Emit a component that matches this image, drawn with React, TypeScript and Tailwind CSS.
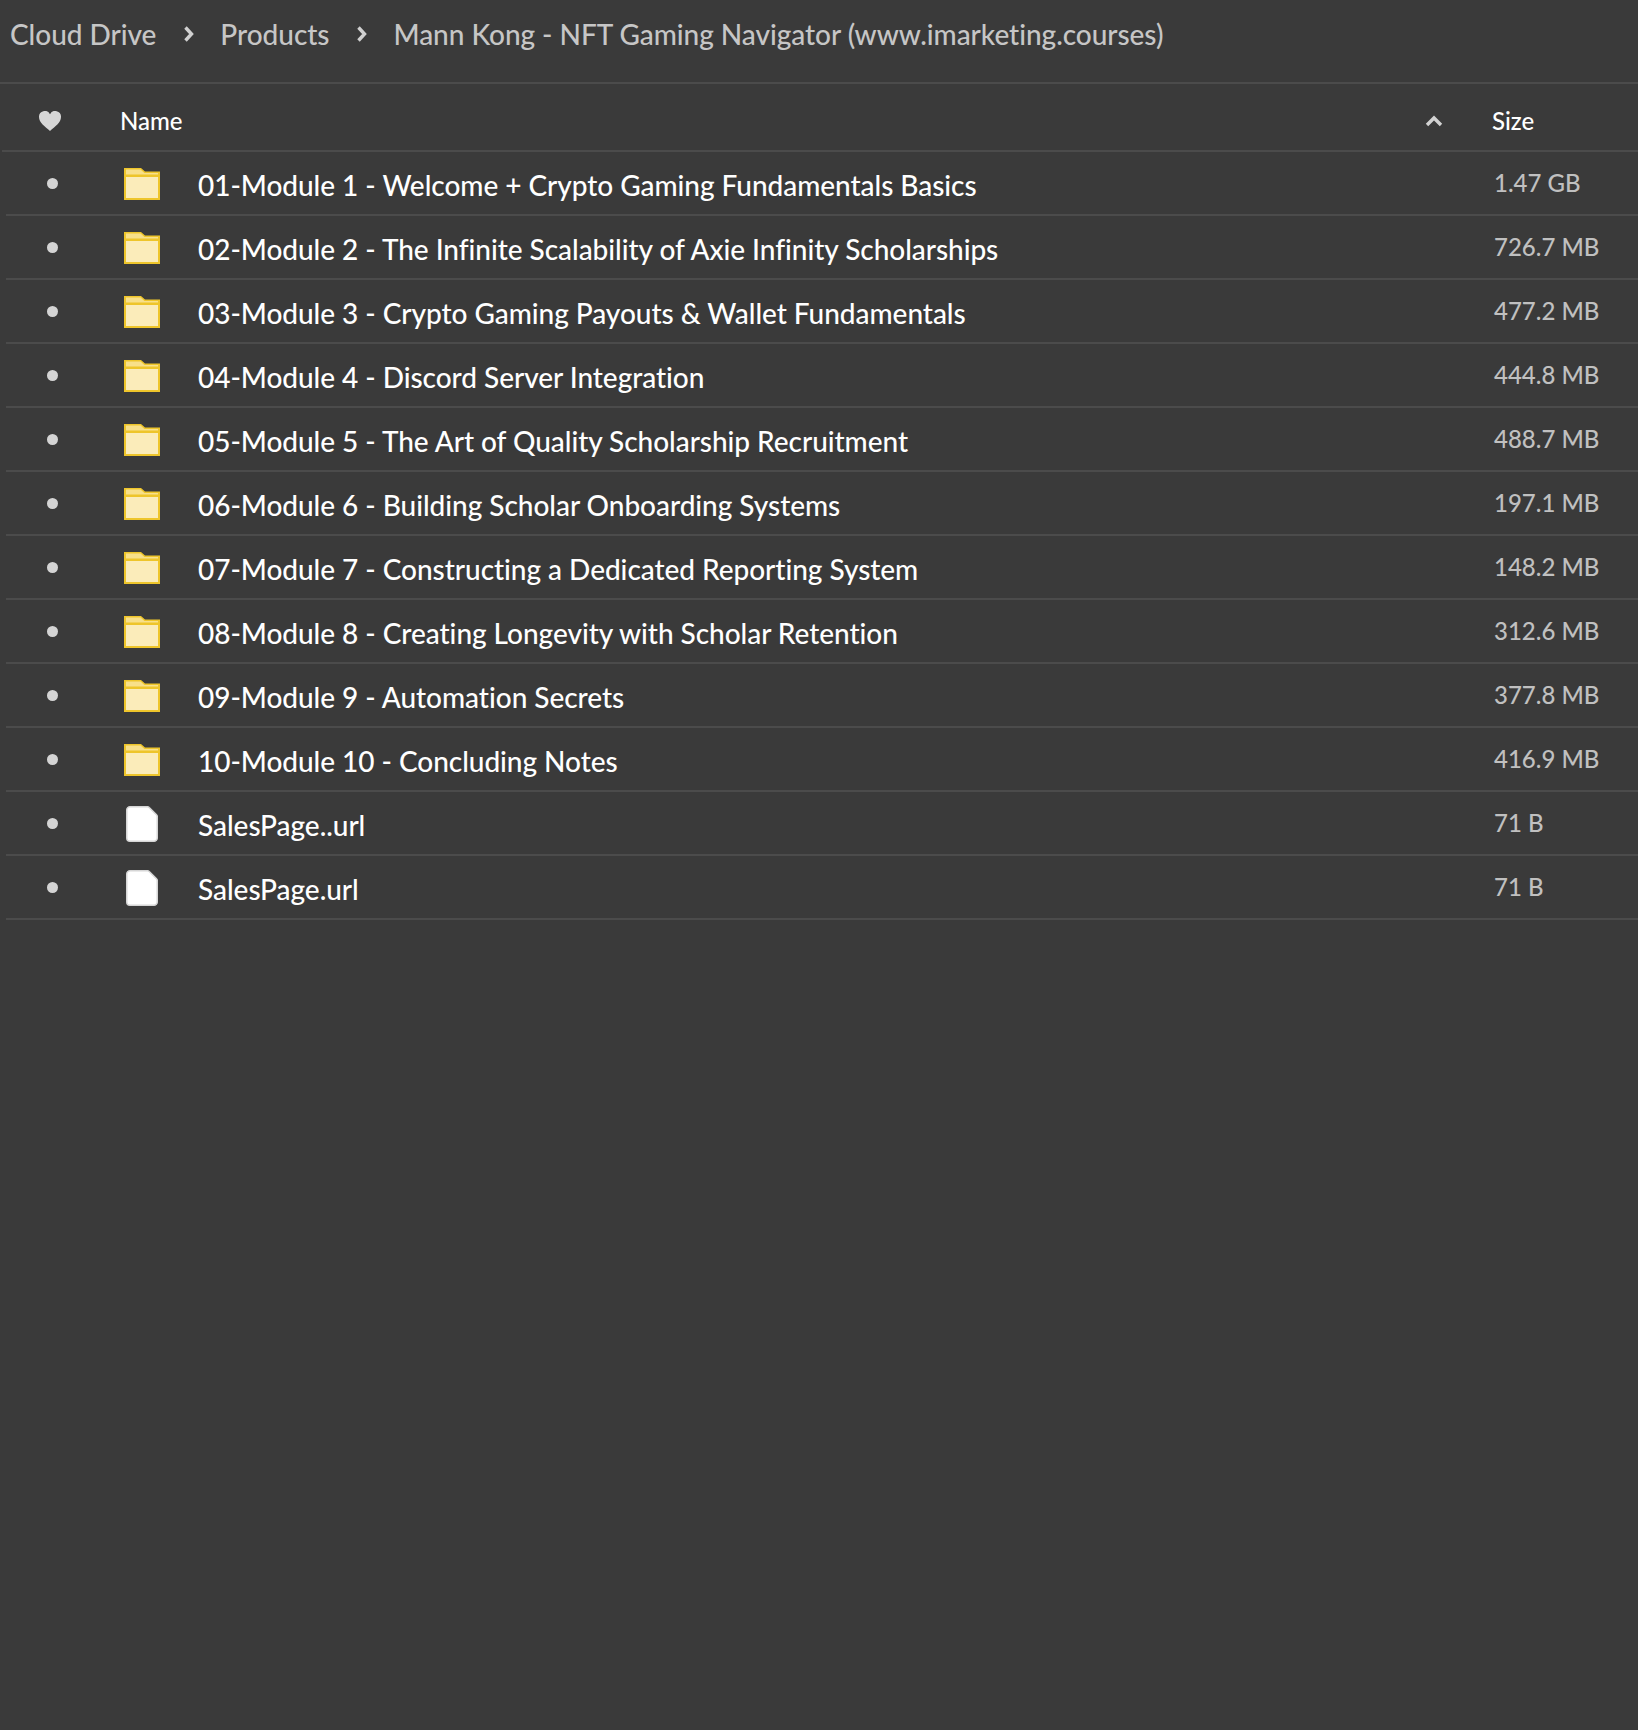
const rows: [string, string, boolean][] = [
  ["01-Module 1 - Welcome + Crypto Gaming Fundamentals Basics", "1.47 GB", true],
  ["02-Module 2 - The Infinite Scalability of Axie Infinity Scholarships", "726.7 MB", true],
  ["03-Module 3 - Crypto Gaming Payouts & Wallet Fundamentals", "477.2 MB", true],
  ["04-Module 4 - Discord Server Integration", "444.8 MB", true],
  ["05-Module 5 - The Art of Quality Scholarship Recruitment", "488.7 MB", true],
  ["06-Module 6 - Building Scholar Onboarding Systems", "197.1 MB", true],
  ["07-Module 7 - Constructing a Dedicated Reporting System", "148.2 MB", true],
  ["08-Module 8 - Creating Longevity with Scholar Retention", "312.6 MB", true],
  ["09-Module 9 - Automation Secrets", "377.8 MB", true],
  ["10-Module 10 - Concluding Notes", "416.9 MB", true],
  ["SalesPage..url", "71 B", false],
  ["SalesPage.url", "71 B", false],
];

function Folder() {
  return (
    <svg width="36" height="32" viewBox="0 0 36 32" className="block">
      <path d="M0 0H17L21 3.5H36V32H0Z" fill="#eec52b" />
      <path d="M2 1.5H16.5L20.5 5H34V6.5H2Z" fill="#f8e08a" />
      <rect x="2" y="9" width="32" height="21" fill="#fbecba" />
    </svg>
  );
}

function FileIcon() {
  return (
    <svg width="32" height="36" viewBox="0 0 32 36" className="block">
      <path d="M4 .75H21.5Q22.5 .75 23.2 1.5L30.5 8.8Q31.25 9.5 31.25 10.5V32A3.25 3.25 0 0 1 28 35.25H4A3.25 3.25 0 0 1 .75 32V4A3.25 3.25 0 0 1 4 .75Z" fill="#ffffff" stroke="#d6d6d6" strokeWidth="1.5" />
    </svg>
  );
}

function Crumb() {
  return (
    <svg width="12" height="18" viewBox="0 0 12 18" className="ml-[27px] mr-[25px]">
      <path d="M2.5 2.5 8.5 9 2.5 15.5" fill="none" stroke="#d0d0d0" strokeWidth="3.4" />
    </svg>
  );
}

export default function App() {
  return (
    <div className="min-h-[1730px] w-[1638px] overflow-hidden bg-[#3a3a3a] font-['Lato','Liberation_Sans',sans-serif]">
      <div className="flex h-[84px] items-center border-b-2 border-[#4b4b4b] pb-[14px] pl-[10px] text-[28px] font-medium tracking-[-0.04px] text-[#c6c6c6]">
        <span>Cloud Drive</span>
        <Crumb />
        <span>Products</span>
        <Crumb />
        <span>Mann Kong - NFT Gaming Navigator (www.imarketing.courses)</span>
      </div>
      <div className="ml-[2px] flex h-[68px] items-center border-b-2 border-[#4b4b4b] pt-[8px] text-[24px] font-medium text-white">
        <div className="flex w-[114px] justify-center pr-[18px]">
          <svg width="22" height="20" viewBox="0 0 22 20">
            <path d="M11 20C6 15.5 0 11.5 0 6A5.8 5.8 0 0 1 11 3.2 5.8 5.8 0 0 1 22 6C22 11.5 16 15.5 11 20Z" fill="#d6d6d6" />
          </svg>
        </div>
        <span className="ml-[4px] flex-1">Name</span>
        <svg width="18" height="12" viewBox="0 0 18 12" className="mr-[49px] mb-[1px]">
          <path d="M2 10 9 3 16 10" fill="none" stroke="#d2d2d2" strokeWidth="3.4" />
        </svg>
        <span className="w-[146px]">Size</span>
      </div>
      {rows.map(([name, size, folder]) => (
        <div key={name} className="ml-[6px] flex h-[64px] items-center border-b-2 border-[#4b4b4b] pt-[1px]">
          <div className="flex w-[92px] justify-center">
            <div className="h-[11px] w-[11px] rounded-full bg-[#d4d4d4]" />
          </div>
          <div className="ml-[26px] flex w-[36px] justify-center">{folder ? <Folder /> : <FileIcon />}</div>
          <div className="ml-[38px] flex-1 pt-[2px] text-[28px] font-medium tracking-[-0.04px] text-white">{name}</div>
          <div className="mb-[1px] w-[144px] text-[24px] font-medium text-[#c0c0c0]">{size}</div>
        </div>
      ))}
    </div>
  );
}
